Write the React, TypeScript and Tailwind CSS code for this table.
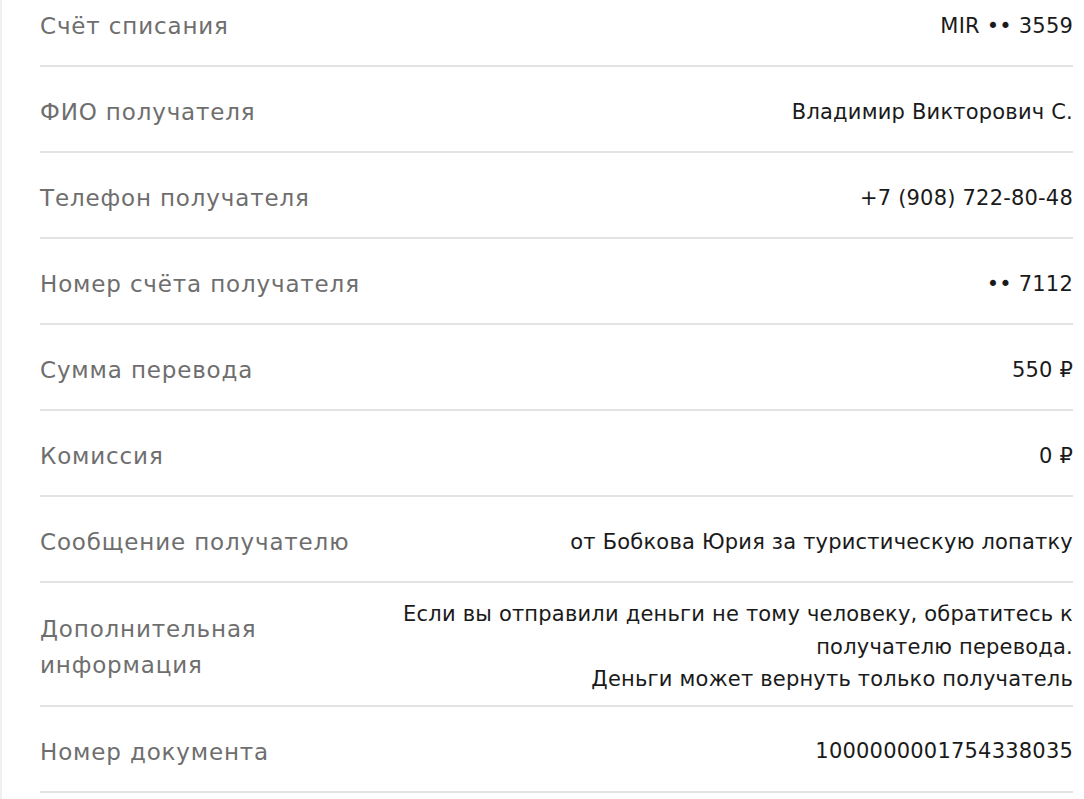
import React from "react";

const rows: { label: string; value: React.ReactNode }[] = [
  { label: "Счёт списания", value: "MIR •• 3559" },
  { label: "ФИО получателя", value: "Владимир Викторович С." },
  { label: "Телефон получателя", value: "+7 (908) 722-80-48" },
  { label: "Номер счёта получателя", value: "•• 7112" },
  { label: "Сумма перевода", value: "550 ₽" },
  { label: "Комиссия", value: "0 ₽" },
  { label: "Сообщение получателю", value: "от Бобкова Юрия за туристическую лопатку" },
  {
    label: "Дополнительная информация",
    value: (
      <>
        Если вы отправили деньги не тому человеку, обратитесь к получателю перевода.
        <br />
        Деньги может вернуть только получатель
      </>
    ),
  },
  { label: "Номер документа", value: "1000000001754338035" },
];

export default function App() {
  return (
    <div
      className="h-[799px] w-[1084px] overflow-hidden bg-white border-l-2 border-[#efefef]"
      style={{ fontFamily: '"DejaVu Sans", sans-serif' }}
    >
      <div className="-mt-[19px] pl-[38px] pr-[11px]">
        {rows.map((r, i) => (
          <div
            key={i}
            className="flex min-h-[86px] items-center justify-between gap-6 border-b-2 border-[#e3e3e3] pt-[15px] pb-[9px]"
          >
            <div className="max-w-[335px] shrink-0 text-[23px] leading-[36px] tracking-[0.85px] text-[#6e6e6e]">
              {r.label}
            </div>
            <div className="max-w-[690px] text-right text-[21px] leading-[32.5px] tracking-[0.2px] text-[#1a1a1a]">
              {r.value}
            </div>
          </div>
        ))}
      </div>
    </div>
  );
}
